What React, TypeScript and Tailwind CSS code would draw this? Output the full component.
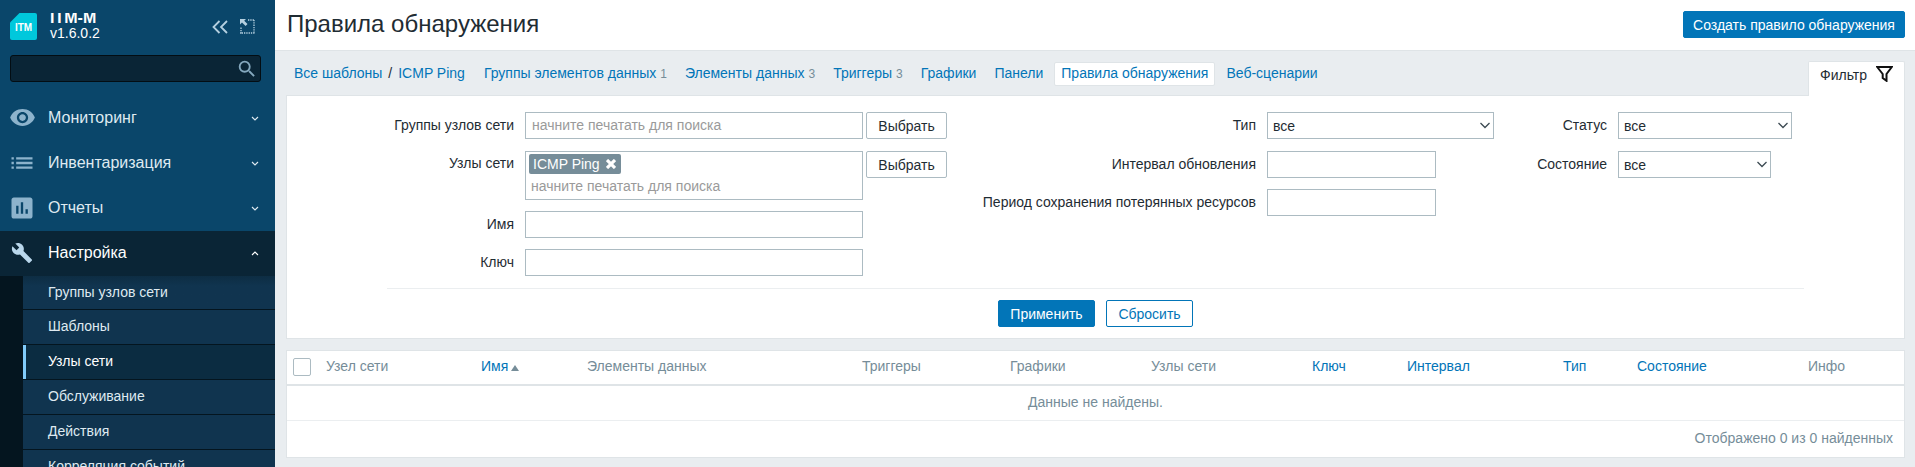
import type { ReactNode } from "react";
import { MdAssessment, MdBuild, MdList, MdSearch, MdVisibility } from "react-icons/md";

const INPUT = "block h-[27px] border border-[#acbbc2] bg-white px-1 text-[#1f2c33] outline-none";
const BUTTON = "h-[27px] shrink-0 rounded-xs border text-center leading-[24px]";

function Chevron({ up = false }: { up?: boolean }) {
  return (
    <svg className="ml-auto size-2" viewBox="0 0 8 8" fill="none" stroke="currentColor" strokeWidth="1.1" aria-hidden="true">
      <path d={up ? "M1 6l3-3 3 3" : "M1 3l3 3 3-3"} />
    </svg>
  );
}

function MenuItem({ icon, label, active = false }: { icon: ReactNode; label: string; active?: boolean }) {
  return (
    <button
      type="button"
      aria-expanded={active}
      className={
        active
          ? "flex h-[45px] w-full items-center bg-[#0a2536] pr-4 pb-[2px] pl-2 text-left text-base text-white"
          : "flex h-[45px] w-full items-center pr-4 pb-[2px] pl-2 text-left text-base text-[#dfeaf1]"
      }
    >
      <span className={active ? "flex w-7 justify-center text-[#b9d7ec]" : "flex w-7 justify-center text-[#8db3cc]"}>{icon}</span>
      <span className="ml-3">{label}</span>
      <Chevron up={active} />
    </button>
  );
}

function Sidebar() {
  const sub = ["Группы узлов сети", "Шаблоны", "Узлы сети", "Обслуживание", "Действия", "Корреляция событий"];
  return (
    <aside className="w-[275px] shrink-0 bg-[#0a466a] text-white">
      <div className="flex h-[55px] items-start pt-[13px] pl-[10px]">
        <svg className="size-[27px]" viewBox="0 0 27 27" role="img" aria-label="ITM">
          <path d="M9.500 0H25a2 2 0 0 1 2 2v23a2 2 0 0 1-2 2H2a2 2 0 0 1-2-2V9.500z" fill="#00c8dc" />
          <text x="13.500" y="18" textAnchor="middle" fontFamily="Liberation Sans" fontWeight="bold" fontSize="10" fill="#fff">ITM</text>
        </svg>
        <div className="ml-[13px]">
          <div className="h-[11px] overflow-hidden text-base leading-[9px] font-bold">ITM-M</div>
          <div className="mt-[1px] text-sm leading-4">v1.6.0.2</div>
        </div>
        <div className="mt-[6px] mr-5 ml-auto flex gap-3 text-[#b5d0e0]">
          <button type="button" aria-label="Свернуть меню">
            <svg className="h-[14px] w-4" viewBox="0 0 16 14" fill="none" stroke="currentColor" strokeWidth="1.800">
              <path d="M7.500 1L1.500 7l6 6M15 1L9 7l6 6" />
            </svg>
          </button>
          <button type="button" aria-label="Скрыть меню">
            <svg className="size-[15px]" viewBox="0 0 15 15" fill="none" stroke="currentColor">
              <path d="M8 1h6.500M14 1v13.500M14.500 14H0M1 14.500V8" strokeWidth="1.300" strokeDasharray="1.300 1" />
              <path d="M0 0h6L4.200 1.800 7.500 5 5.600 7 2 3.600 0 5.600z" fill="currentColor" stroke="none" />
            </svg>
          </button>
        </div>
      </div>
      <div className="mr-[14px] ml-[10px] flex h-[27px] items-center rounded-[3px] border border-[#030d13] bg-[#0a2536] pr-[2px]">
        <input aria-label="Поиск" className="min-w-0 flex-1 bg-transparent px-2 outline-none" />
        <button type="button" aria-label="Искать" className="text-[#84a8be]"><MdSearch size={22} /></button>
      </div>
      <nav className="mt-[14px]">
        <MenuItem icon={<MdVisibility size={27} />} label="Мониторинг" />
        <MenuItem icon={<MdList size={28} />} label="Инвентаризация" />
        <MenuItem icon={<MdAssessment size={28} />} label="Отчеты" />
        <MenuItem icon={<MdBuild size={22} />} label="Настройка" active />
        <ul className="bg-[#04151f] pl-[23px]">
          {sub.map((s, i) => (
            <li key={s} className={i === 0 ? "h-[34px] border-b border-[#04151f]" : "h-[35px] border-b border-[#04151f]"}>
              <a
                href="#"
                className={
                  s === "Узлы сети"
                    ? "flex h-full items-center border-l-3 border-[#81cbf9] bg-[#0b2c41] pb-[2px] pl-[22px] text-white"
                    : i === 0
                      ? "flex h-full items-center bg-linear-to-b from-[#0d2d43] to-[#10344f] to-30% pb-[2px] pl-[25px] text-[#dfeaf1]"
                      : "flex h-full items-center bg-[#10344f] pb-[2px] pl-[25px] text-[#dfeaf1]"
                }
              >
                {s}
              </a>
            </li>
          ))}
        </ul>
      </nav>
    </aside>
  );
}

function Tabs() {
  const tabs: { label: string; count?: number; on?: boolean }[] = [
    { label: "Группы элементов данных", count: 1 },
    { label: "Элементы данных", count: 3 },
    { label: "Триггеры", count: 3 },
    { label: "Графики" },
    { label: "Панели" },
    { label: "Правила обнаружения", on: true },
    { label: "Веб-сценарии" },
  ];
  return (
    <nav className="flex h-6 items-start leading-[21px] text-[#0275b8]">
      <a href="#" className="ml-2 border-y border-transparent">Все шаблоны</a>
      <span className="mx-[6px] border-y border-transparent text-[#1f2c33]">/</span>
      <a href="#" className="mr-3 border-y border-transparent">ICMP Ping</a>
      <div className="flex gap-1">
        {tabs.map((t) => (
          <a
            key={t.label}
            href="#"
            className={
              t.on
                ? "h-6 rounded-xs border border-[#dfe4e7] bg-white px-[6px]"
                : "h-6 border border-transparent px-[6px]"
            }
          >
            {t.label}
            {t.count && <span className="ml-1 text-xs text-[#768d99]">{t.count}</span>}
          </a>
        ))}
      </div>
    </nav>
  );
}

function Row({ id, label, children }: { id: string; label: string; children: ReactNode }) {
  return (
    <div className="flex items-start justify-end">
      <label htmlFor={id} className="mr-[11px] leading-[26px] whitespace-nowrap">{label}</label>
      {children}
    </div>
  );
}

function Select({ id, width }: { id: string; width: string }) {
  return (
    <div className={`relative ${width}`}>
      <select id={id} className="block h-[27px] w-full appearance-none border border-[#acbbc2] bg-white px-[5px] outline-none">
        <option>все</option>
      </select>
      <svg className="pointer-events-none absolute top-[10px] right-1 h-[7px] w-[10px]" viewBox="0 0 10 7" fill="none" stroke="#3c4a52" strokeWidth="1.300">
        <path d="M0.500 1L5 5.500 9.500 1" />
      </svg>
    </div>
  );
}

function Filter() {
  return (
    <form className="border border-[#dfe4e7] bg-white pt-4 pb-[11px] text-[#1f2c33]" onSubmit={(e) => e.preventDefault()}>
      <div className="mx-[100px]">
        <div className="grid grid-cols-[560fr_547fr_310fr] border-b border-[#ebeef0] pb-[12px]">
          <div className="flex flex-col gap-[11px]">
            <Row id="groups" label="Группы узлов сети">
              <input id="groups" placeholder="начните печатать для поиска" className={`${INPUT} w-[338px] pb-[2px] pl-[6px] placeholder:text-[#9a9a9a]`} />
              <button type="button" className={`${BUTTON} ml-[3px] w-[81px] border-[#acbbc2]`}>Выбрать</button>
            </Row>
            <Row id="hosts" label="Узлы сети">
              <div className="mt-[1px] w-[338px] border border-[#acbbc2] px-[3px] pt-[2px]">
                <span className="inline-flex h-5 items-center rounded-xs bg-[#768d99] pr-[5px] pl-1 align-top text-white">
                  ICMP Ping
                  <button type="button" aria-label="Удалить ICMP Ping" className="ml-[6px]">
                    <svg className="size-[10px]" viewBox="0 0 10 10" stroke="currentColor" strokeWidth="3.200"><path d="M1 1l8 8M9 1L1 9" /></svg>
                  </button>
                </span>
                <input id="hosts" placeholder="начните печатать для поиска" className="block h-[25px] w-full pb-[2px] pl-[2px] outline-none placeholder:text-[#9a9a9a]" />
              </div>
              <button type="button" className={`${BUTTON} mt-[1px] ml-[3px] w-[81px] border-[#acbbc2]`}>Выбрать</button>
            </Row>
            <div className="mr-[84px] flex flex-col gap-[11px]">
              <Row id="name" label="Имя"><input id="name" className={`${INPUT} w-[338px]`} /></Row>
              <Row id="key" label="Ключ"><input id="key" className={`${INPUT} w-[338px]`} /></Row>
            </div>
          </div>
          <div className="flex flex-col gap-3">
            <Row id="type" label="Тип"><Select id="type" width="w-[227px]" /></Row>
            <div className="mr-[58px] flex flex-col gap-[11px]">
              <Row id="interval" label="Интервал обновления"><input id="interval" className={`${INPUT} w-[169px]`} /></Row>
              <Row id="lifetime" label="Период сохранения потерянных ресурсов"><input id="lifetime" className={`${INPUT} w-[169px]`} /></Row>
            </div>
          </div>
          <div className="mr-3 flex flex-col gap-3">
            <Row id="status" label="Статус"><Select id="status" width="w-[174px]" /></Row>
            <div className="mr-[21px]"><Row id="state" label="Состояние"><Select id="state" width="w-[153px]" /></Row></div>
          </div>
        </div>
      </div>
      <div className="flex justify-center gap-[11px] pt-[11px]">
        <button type="submit" className={`${BUTTON} w-[97px] border-[#0275b8] bg-[#0275b8] text-white`}>Применить</button>
        <button type="reset" className={`${BUTTON} w-[87px] border-[#0275b8] bg-white text-[#0275b8]`}>Сбросить</button>
      </div>
    </form>
  );
}

function Results() {
  const cols: { label: string; w: string; link?: boolean }[] = [
    { label: "Узел сети", w: "w-[155px]" },
    { label: "Имя", w: "w-[106px]", link: true },
    { label: "Элементы данных", w: "w-[275px]" },
    { label: "Триггеры", w: "w-[148px]" },
    { label: "Графики", w: "w-[141px]" },
    { label: "Узлы сети", w: "w-[161px]" },
    { label: "Ключ", w: "w-[95px]", link: true },
    { label: "Интервал", w: "w-[156px]", link: true },
    { label: "Тип", w: "w-[74px]", link: true },
    { label: "Состояние", w: "w-[171px]", link: true },
    { label: "Инфо", w: "" },
  ];
  return (
    <div className="mt-[11px] border border-[#dfe4e7] bg-white text-[#768d99]">
      <table className="w-full table-fixed border-collapse text-left">
        <thead>
          <tr className="h-[34px] border-b-2 border-[#dfe4e7]">
            <th className="w-[35px] pb-[2px] pl-[6px]">
              <input type="checkbox" aria-label="Выбрать все" className="block size-[18px] appearance-none rounded-xs border border-[#acbbc2] bg-white" />
            </th>
            {cols.map((c) => (
              <th key={c.label} className={`${c.w} pb-[3px] pl-1 font-normal`}>
                {c.link ? <a href="#" className="text-[#0275b8]">{c.label}</a> : c.label}
                {c.label === "Имя" && (
                  <svg className="ml-[3px] inline-block h-[6px] w-2 align-baseline" viewBox="0 0 8 6" aria-hidden="true"><path d="M4 0L8 6H0z" fill="#768d99" /></svg>
                )}
              </th>
            ))}
          </tr>
        </thead>
        <tbody>
          <tr className="h-[35px] border-b border-[#ebeef0]">
            <td colSpan={12} className="pb-[2px] text-center">Данные не найдены.</td>
          </tr>
        </tbody>
      </table>
      <div className="h-9 pr-[11px] text-right leading-[35px]">Отображено 0 из 0 найденных</div>
    </div>
  );
}

export default function App() {
  return (
    <div className="flex h-screen overflow-hidden bg-[#e9edf0] font-['Liberation_Sans',Arial,sans-serif] text-sm">
      <Sidebar />
      <main className="min-w-0 flex-1">
        <header className="flex h-[51px] items-start justify-between border-b border-[#dfe4e7] bg-white pt-[11px] pr-[10px] pl-3">
          <h1 className="text-2xl leading-[26px] text-[#1f2c33]">Правила обнаружения</h1>
          <button type="button" className={`${BUTTON} w-[222px] border-[#0275b8] bg-[#0275b8] text-white`}>Создать правило обнаружения</button>
        </header>
        <div className="pr-[10px] pl-[11px]">
          <div className="flex items-start justify-between pt-[10px]">
            <div className="pt-[1px]"><Tabs /></div>
            <button type="button" className="relative -mb-px flex h-[35px] w-[97px] justify-between rounded-t-xs border border-b-0 border-[#dfe4e7] bg-white pt-[3px] pr-[11px] pl-[11px] text-[#1f2c33]">
              Фильтр
              <svg className="mt-[1px] h-4 w-[17px]" viewBox="0 0 17 16" fill="none" stroke="#111" strokeWidth="2">
                <path d="M1.200 1h14.600L10.500 8v6.800L6.700 12V8z" />
              </svg>
            </button>
          </div>
          <Filter />
          <Results />
        </div>
      </main>
    </div>
  );
}
